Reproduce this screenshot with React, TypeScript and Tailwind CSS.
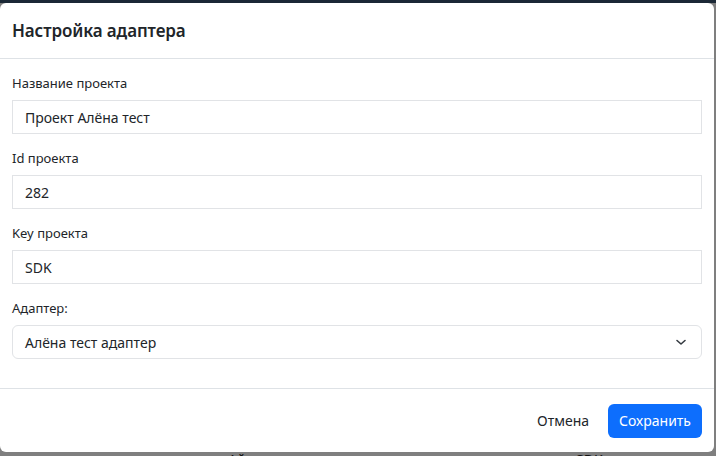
import React from 'react';

const fields = [
  { label: 'Название проекта', value: 'Проект Алёна тест' },
  { label: 'Id проекта', value: '282' },
  { label: 'Key проекта', value: 'SDK' },
];

const ChevronDown = () => (
  <svg className="w-4 h-4" viewBox="0 0 16 16" fill="none" aria-hidden="true">
    <path
      d="M4 6.5l4 3.5 4-3.5"
      stroke="#343a40"
      strokeWidth={1.6}
      strokeLinecap="round"
      strokeLinejoin="round"
    />
  </svg>
);

export default function App() {
  return (
    <div
      className="w-[716px] h-[456px] overflow-hidden bg-[#7f7f7f] flex flex-col text-[#212529]"
      style={{ fontFamily: '"Noto Sans", "Open Sans", Arial, sans-serif' }}
    >
      {/* dimmed navbar behind the backdrop */}
      <div className="h-[3px] shrink-0 bg-[#1b2836]" />

      {/* Modal */}
      <div className="w-[714px] h-[449px] shrink-0 bg-white rounded-md flex flex-col">
        <div className="h-[56px] px-3 flex items-center border-b border-[#dee2e6]">
          <h2 className="text-[17px] font-semibold leading-6 tracking-[-0.1px]">Настройка адаптера</h2>
        </div>

        <div className="px-3 pt-4 pb-4 flex-1">
          {fields.map((f) => (
            <div key={f.label} className="mb-4">
              <label className="block text-[13px] leading-[17px] mb-2">{f.label}</label>
              <div className="h-[34px] border border-[#e1e3e6] px-3 flex items-center text-[14px]">
                {f.value}
              </div>
            </div>
          ))}
          <div>
            <label className="block text-[13px] leading-[17px] mb-2">Адаптер:</label>
            <div className="h-[34px] border border-[#e1e3e6] rounded-md px-3 flex items-center justify-between text-[14px]">
              <span>Алёна тест адаптер</span>
              <ChevronDown />
            </div>
          </div>
        </div>

        <div className="h-[64px] border-t border-[#dee2e6] px-3 flex items-center justify-end gap-[7px]">
          <button className="px-3 h-[34px] text-[14px] text-[#212529]">Отмена</button>
          <button className="px-[11px] h-[34px] rounded-md bg-[#0d6efd] text-white text-[14px]">
            Сохранить
          </button>
        </div>
      </div>

      {/* table text peeking under the dialog */}
      <div className="relative h-[4px] overflow-hidden text-[14px] text-[#111]">
        <span className="absolute left-[228px] top-[1px] leading-none">Ай</span>
        <span className="absolute left-[576px] top-[1px] leading-none">SDK</span>
      </div>
    </div>
  );
}
